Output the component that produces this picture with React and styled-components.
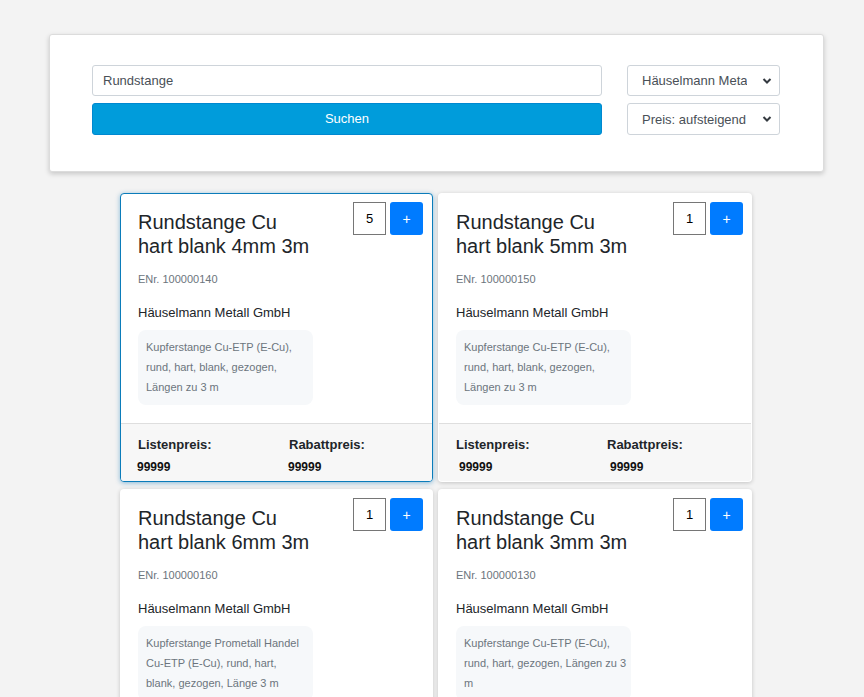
import React from "react";
import styled, { createGlobalStyle, css } from "styled-components";

const GlobalStyle = createGlobalStyle`
    body {
        margin: 0;
        background: #f3f3f3;
        font-family: "Liberation Sans", Arial, sans-serif;
        color: #212529;
    }
`

const Page = styled.div`
    padding: 34px 0 0 49px;
    height: 697px;
    box-sizing: border-box;
    overflow: hidden;
`

const SearchPanel = styled.div`
    width: 775px;
    height: 138px;
    box-sizing: border-box;
    background: #fff;
    border: 1px solid #dcdcdc;
    border-radius: 3px;
    box-shadow: 0 2px 5px rgba(0, 0, 0, 0.18);
    padding: 30px 43px 0 42px;
    display: grid;
    grid-template-columns: 510px 153px;
    grid-template-rows: 31px 32px;
    column-gap: 25px;
    row-gap: 7px;
`

const TextInput = styled.input`
    box-sizing: border-box;
    width: 100%;
    height: 100%;
    border: 1px solid #ced4da;
    border-radius: 3px;
    padding: 0 10px;
    font: 13px "Liberation Sans", Arial, sans-serif;
    color: #495057;
    outline: none;
`

const SearchButton = styled.button`
    height: 100%;
    border: 1px solid #0088d0;
    border-radius: 3px;
    background: #009cdb;
    color: #fff;
    font: 13px "Liberation Sans", Arial, sans-serif;
    padding: 0 0 1px;
`

const SelectWrap = styled.div`
    position: relative;
    height: 100%;
`

const Select = styled.select`
    appearance: none;
    -webkit-appearance: none;
    box-sizing: border-box;
    width: 100%;
    height: 100%;
    border: 1px solid #ced4da;
    border-radius: 3px;
    background: #fff;
    padding: 0 32px 0 14px;
    font: 13px "Liberation Sans", Arial, sans-serif;
    color: #495057;
    outline: none;
`

const Chevron = styled.svg`
    position: absolute;
    right: 8px;
    top: 50%;
    margin-top: -4px;
    pointer-events: none;
`

const Grid = styled.div`
    margin: 21px 0 0 71px;
    display: grid;
    grid-template-columns: 313px 314px;
    column-gap: 5px;
    row-gap: 7px;
`

const Card = styled.div`
    box-sizing: border-box;
    background: #fff;
    border-radius: 4px;
    border: 1px solid transparent;
    box-shadow: 0 1px 4px rgba(0, 0, 0, 0.2);
    height: 289px;
    display: flex;
    flex-direction: column;
    overflow: hidden;
    ${props => props.selected && css`
        border-color: #0b7cba;
        box-shadow: 0 1px 5px rgba(0, 110, 180, 0.45);
    `}
`

const CardBody = styled.div`
    flex: 1;
    padding: 8px ${props => props.right ? 8 : 9}px 0 17px;
`

const TopRow = styled.div`
    display: flex;
    justify-content: space-between;
    align-items: flex-start;
`

const Title = styled.h2`
    margin: 8px 0 0;
    width: 176px;
    font-size: 20px;
    font-weight: normal;
    line-height: 24px;
    color: #212529;
`

const Controls = styled.div`
    display: flex;
    gap: 4px;
`

const QtyBox = styled.input`
    box-sizing: border-box;
    width: 33px;
    height: 33px;
    border: 1px solid #767676;
    text-align: center;
    font: 13px "Liberation Sans", Arial, sans-serif;
    color: #000;
    padding: 0;
    outline: none;
`

const AddButton = styled.button`
    width: 33px;
    height: 33px;
    border: none;
    border-radius: 3px;
    background: #007bff;
    color: #fff;
    font: 14px "Liberation Sans", Arial, sans-serif;
    padding: 0;
`

const ENr = styled.div`
    margin-top: 13px;
    font-size: 11px;
    line-height: 16px;
    color: #6c757d;
`

const Company = styled.div`
    margin-top: 18px;
    font-size: 13px;
    line-height: 16px;
    color: #212529;
`

const Description = styled.div`
    box-sizing: border-box;
    margin-top: 9px;
    width: 175px;
    padding: 7px 4px 8px 8px;
    background: #f6f8fa;
    border-radius: 8px;
    font-size: 11px;
    line-height: 20px;
    color: #6c757d;
`

const Footer = styled.div`
    height: 58px;
    box-sizing: border-box;
    border-top: 1px solid #dedede;
    background: #f7f7f7;
    padding: 13px 0 0 17px;
    display: grid;
    grid-template-columns: 151px 1fr;
`

const PriceLabel = styled.div`
    font-size: 13px;
    font-weight: bold;
    line-height: 16px;
    color: #212529;
`

const PriceValue = styled.div`
    margin-top: 6px;
    margin-left: ${props => props.shift}px;
    font-size: 12px;
    font-weight: bold;
    line-height: 16px;
    color: #111;
`

const products = [
    { size: "4mm", enr: "100000140", qty: 5, selected: true, shift: -1,
      desc: "Kupferstange Cu-ETP (E-Cu), rund, hart, blank, gezogen, Längen zu 3 m" },
    { size: "5mm", enr: "100000150", qty: 1, shift: 3, right: true,
      desc: "Kupferstange Cu-ETP (E-Cu), rund, hart, blank, gezogen, Längen zu 3 m" },
    { size: "6mm", enr: "100000160", qty: 1, shift: 0,
      desc: "Kupferstange Prometall Handel Cu-ETP (E-Cu), rund, hart, blank, gezogen, Länge 3 m" },
    { size: "3mm", enr: "100000130", qty: 1, shift: 0, right: true,
      desc: "Kupferstange Cu-ETP (E-Cu), rund, hart, gezogen, Längen zu 3 m" },
]

const SelectBox = ({value}) => (
    <SelectWrap>
        <Select defaultValue={value}>
            <option>{value}</option>
        </Select>
        <Chevron width="10" height="8" viewBox="0 0 10 8">
            <path d="M1.5 2 L5 5.5 L8.5 2" fill="none" stroke="#343a40" strokeWidth="2" />
        </Chevron>
    </SelectWrap>
)

const ProductCard = ({product}) => (
    <Card selected={product.selected}>
        <CardBody right={product.right}>
            <TopRow>
                <Title>Rundstange Cu hart blank {product.size} 3m</Title>
                <Controls>
                    <QtyBox defaultValue={product.qty} />
                    <AddButton>+</AddButton>
                </Controls>
            </TopRow>
            <ENr>ENr. {product.enr}</ENr>
            <Company>Häuselmann Metall GmbH</Company>
            <Description>{product.desc}</Description>
        </CardBody>
        <Footer>
            <div>
                <PriceLabel>Listenpreis:</PriceLabel>
                <PriceValue shift={product.shift}>99999</PriceValue>
            </div>
            <div>
                <PriceLabel>Rabattpreis:</PriceLabel>
                <PriceValue shift={product.shift}>99999</PriceValue>
            </div>
        </Footer>
    </Card>
)

export default function App() {
    return (
        <Page>
            <GlobalStyle />
            <SearchPanel>
                <TextInput defaultValue="Rundstange" />
                <SelectBox value="Häuselmann Metall GmbH" />
                <SearchButton>Suchen</SearchButton>
                <SelectBox value="Preis: aufsteigend" />
            </SearchPanel>
            <Grid>
                {products.map(p => <ProductCard key={p.enr} product={p} />)}
            </Grid>
        </Page>
    )
}
